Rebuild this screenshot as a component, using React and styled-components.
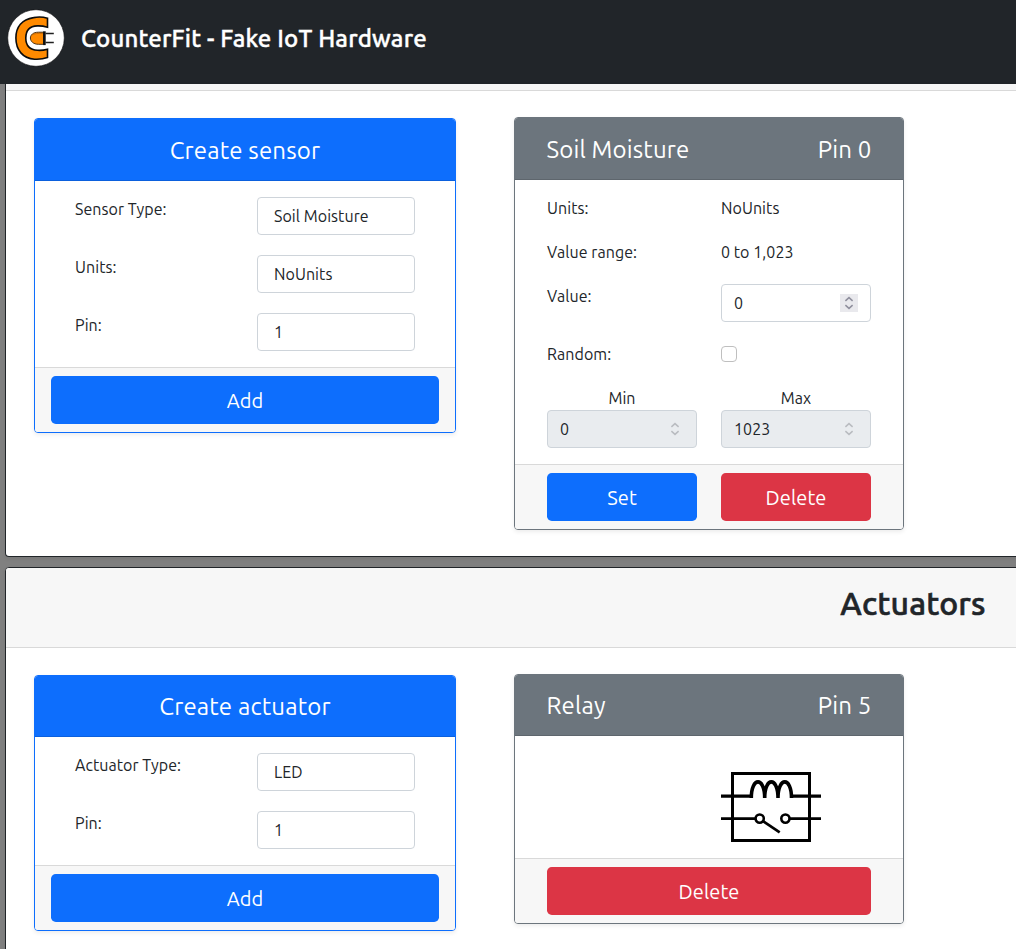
import React from 'react';
import styled, { createGlobalStyle, css } from 'styled-components';

const GlobalStyle = createGlobalStyle`
  *, *::before, *::after { box-sizing: border-box; }
  body {
    margin: 0;
    background: #808080;
    color: #212529;
    font-family: "Ubuntu", "Noto Sans", sans-serif;
    font-size: 16px;
    line-height: 24px;
    letter-spacing: 0.06px;
    overflow: hidden;
  }
`;

const Page = styled.div`
  height: 949px;
  overflow: hidden;
`;

const Navbar = styled.header`
  display: flex;
  align-items: flex-start;
  gap: 16px;
  height: 84px;
  padding: 9px 7px;
  background: #212529;
`;

const Brand = styled.h1`
  margin: 12px 0 0;
  font-size: 24px;
  line-height: 36px;
  font-weight: 500;
  letter-spacing: 0.18px;
  -webkit-text-stroke: 0.4px currentColor;
  color: #fff;
`;

const Section = styled.section`
  width: 1816px;
  height: ${(p) => p.$height}px;
  margin: 0 0 10px 5px;
  background: #fff;
  border: 1px solid #212529;
  border-radius: 4px;
  overflow: hidden;
  box-shadow: 0 2px 4px rgba(0, 0, 0, 0.075);
  ${(p) =>
    p.$continued &&
    css`
      border-top: 0;
      border-top-left-radius: 0;
      border-top-right-radius: 0;
    `}
`;

const SectionHeader = styled.div`
  display: flex;
  justify-content: center;
  height: ${(p) => p.$height}px;
  background: #f7f7f7;
  border-bottom: 1px solid #d9d9d9;
`;

const SectionTitle = styled.h2`
  margin: 16px 0 0;
  font-size: 32px;
  line-height: 38px;
  font-weight: 500;
  letter-spacing: 0.15px;
  -webkit-text-stroke: 0.6px currentColor;
`;

const Deck = styled.div`
  display: flex;
  align-items: flex-start;
  gap: 58px;
  padding: 26px 28px;
`;

const tones = { primary: '#0d6efd', secondary: '#6c757d', danger: '#dc3545' };

const Card = styled.article`
  width: ${(p) => p.$width}px;
  margin-top: ${(p) => p.$drop || 0}px;
  border: 1px solid ${(p) => tones[p.$tone]};
  border-radius: 4px;
  background: #fff;
  overflow: hidden;
  box-shadow: 0 2px 4px rgba(0, 0, 0, 0.075);
`;

const CardHeader = styled.div`
  display: flex;
  align-items: center;
  justify-content: ${(p) => (p.$split ? 'space-between' : 'center')};
  height: ${(p) => p.$height}px;
  padding: 2px 31.5px 0;
  background: ${(p) => tones[p.$tone]};
  border-bottom: 1px solid rgba(0, 0, 0, 0.125);
  color: #fff;
  font-size: 24px;
  line-height: 36px;
  letter-spacing: 0.16px;
`;

const FormBody = styled.div`
  display: grid;
  gap: 20px;
  padding: 16px 40px;
`;

const FormRow = styled.div`
  display: grid;
  grid-template-columns: 182px 158px;
  align-items: start;
`;

const DetailBody = styled.div`
  display: grid;
  grid-template-columns: 150px 150px;
  column-gap: 24px;
  row-gap: 20px;
  padding: 16px 32px;
  align-items: start;
`;

const Control = styled.div`
  display: flex;
  align-items: center;
  justify-content: space-between;
  height: 38px;
  padding: 0 12px 0 ${(p) => (p.$select ? 16 : 12)}px;
  border: 1px solid #ced4da;
  border-radius: 4px;
  background: ${(p) => (p.$disabled ? '#e9ecef' : '#fff')};
`;

const Stepper = styled.span`
  display: flex;
  width: 18px;
  height: 18px;
  background: ${(p) => (p.$disabled ? 'transparent' : '#e9e9ed')};
  color: ${(p) => (p.$disabled ? '#b9bcc0' : '#8f8f9d')};
`;

const Checkbox = styled.span`
  width: 16px;
  height: 16px;
  margin-top: 4px;
  border: 1px solid #bfbfbf;
  border-radius: 4px;
  background: #fff;
`;

const Range = styled.div`
  display: grid;
  text-align: center;
`;

const CardFooter = styled.div`
  display: grid;
  grid-auto-flow: column;
  grid-auto-columns: 1fr;
  gap: 24px;
  padding: 8px ${(p) => p.$inset}px;
  background: #f7f7f7;
  border-top: 1px solid #d9d9d9;
`;

const Button = styled.button`
  height: 48px;
  padding: 2px 0 0;
  border: 0;
  border-radius: 4.8px;
  background: ${(p) => tones[p.$tone]};
  color: #fff;
  font-family: inherit;
  font-size: 20px;
  line-height: 30px;
  letter-spacing: 0.1px;
`;

const SymbolBody = styled.div`
  display: flex;
  justify-content: flex-end;
  height: 122px;
  padding: 36px 82px 0;
`;

const Logo = () => (
  <svg width="58" height="58" viewBox="0 0 58 58" fill="none">
    <circle cx="29" cy="29" r="28.3" fill="#fff" stroke="#0b0c0e" strokeWidth="0.6" />
    <path
      d="M40.5 9.2 C36 7.8 31 7.6 26.5 8.6 C15 10.5 8.9 18 8.9 29 C8.9 41 16 49.6 27.5 50.2 C32.5 50.5 37 49.8 40.5 48.5 V40.2 C37 41.2 34 41.6 30.5 41.3 C22.5 40.8 18.8 36 18.8 29 C18.8 21.8 22.6 17.2 30.3 16.9 C34 16.7 37 17.2 40.5 18.2 Z"
      fill="#ff8a00"
      stroke="#0c0c0c"
      strokeWidth="1.6"
    />
    <path
      d="M36.5 23.2 H31.5 C26 23.2 23.4 26 23.4 29 C23.4 32.2 26.2 35.3 31.5 35.3 H36.5 Z"
      fill="#ff8a00"
      stroke="#3a2208"
      strokeWidth="0.9"
    />
    <path d="M24.5 26.2 C27.5 24.4 31 24.2 36 24.6" stroke="#b96308" strokeWidth="0.7" />
    <path d="M37.4 22.3 V36.1" stroke="#101010" strokeWidth="2.6" />
    <path d="M38.5 24.5 H46.8 M38.5 33.5 H46.8" stroke="#202020" strokeWidth="1.3" />
  </svg>
);

const RelaySymbol = () => (
  <svg width="100" height="70" viewBox="0 0 100 70" fill="none" stroke="#000">
    <rect x="11.5" y="1.5" width="77" height="67" strokeWidth="3" />
    <path d="M0 24.2 H30 M71 24.2 H100" strokeWidth="3.2" />
    <path
      d="M30.3 26 C30.3 4.5 43.7 4.5 43.7 26 M43.7 26 C43.7 4.5 57 4.5 57 26 M57 26 C57 4.5 70.5 4.5 70.5 26"
      strokeWidth="3.6"
    />
    <path d="M0 46.6 H34 M69 46.6 H100" strokeWidth="2.7" />
    <circle cx="38.7" cy="46.6" r="4.1" strokeWidth="2.6" />
    <circle cx="64.4" cy="46.6" r="4.1" strokeWidth="2.6" />
    <path d="M42 49.2 L58.7 60.4" strokeWidth="2.7" />
  </svg>
);

const StepArrows = () => (
  <svg width="18" height="18" viewBox="0 0 18 18" fill="none" stroke="currentColor" strokeWidth="1.5">
    <path d="M5.4 6.9 L9 3.6 L12.6 6.9 M5.4 11.1 L9 14.4 L12.6 11.1" />
  </svg>
);

const NumberField = ({ value, disabled }) => (
  <Control $disabled={disabled}>
    {value}
    <Stepper $disabled={disabled}>
      <StepArrows />
    </Stepper>
  </Control>
);

const CreateCard = ({ title, fields, drop, headerHeight }) => (
  <Card $tone="primary" $width={422} $drop={drop}>
    <CardHeader $tone="primary" $height={headerHeight}>{title}</CardHeader>
    <FormBody>
      {fields.map(([label, value]) => (
        <FormRow key={label}>
          <span>{label}</span>
          <Control $select>{value}</Control>
        </FormRow>
      ))}
    </FormBody>
    <CardFooter $inset={16}>
      <Button $tone="primary">Add</Button>
    </CardFooter>
  </Card>
);

export default function App() {
  return (
    <Page>
      <GlobalStyle />
      <Navbar>
        <Logo />
        <Brand>CounterFit - Fake IoT Hardware</Brand>
      </Navbar>

      <Section $continued $height={473}>
        <SectionHeader $height={7} />
        <Deck>
          <CreateCard
            title="Create sensor"
            drop={1}
            headerHeight={62}
            fields={[
              ['Sensor Type:', 'Soil Moisture'],
              ['Units:', 'NoUnits'],
              ['Pin:', '1'],
            ]}
          />
          <Card $tone="secondary" $width={390}>
            <CardHeader $tone="secondary" $height={62} $split>
              <span>Soil Moisture</span>
              <span>Pin 0</span>
            </CardHeader>
            <DetailBody>
              <span>Units:</span>
              <span>NoUnits</span>
              <span>Value range:</span>
              <span>0 to 1,023</span>
              <span>Value:</span>
              <NumberField value="0" />
              <span>Random:</span>
              <Checkbox />
              <Range>
                Min
                <NumberField value="0" disabled />
              </Range>
              <Range>
                Max
                <NumberField value="1023" disabled />
              </Range>
            </DetailBody>
            <CardFooter $inset={32}>
              <Button $tone="primary">Set</Button>
              <Button $tone="danger">Delete</Button>
            </CardFooter>
          </Card>
        </Deck>
      </Section>

      <Section $height={480}>
        <SectionHeader $height={80}>
          <SectionTitle>Actuators</SectionTitle>
        </SectionHeader>
        <Deck>
          <CreateCard
            title="Create actuator"
            drop={1}
            headerHeight={61}
            fields={[
              ['Actuator Type:', 'LED'],
              ['Pin:', '1'],
            ]}
          />
          <Card $tone="secondary" $width={390}>
            <CardHeader $tone="secondary" $height={61} $split>
              <span>Relay</span>
              <span>Pin 5</span>
            </CardHeader>
            <SymbolBody>
              <RelaySymbol />
            </SymbolBody>
            <CardFooter $inset={32}>
              <Button $tone="danger">Delete</Button>
            </CardFooter>
          </Card>
        </Deck>
      </Section>
    </Page>
  );
}
